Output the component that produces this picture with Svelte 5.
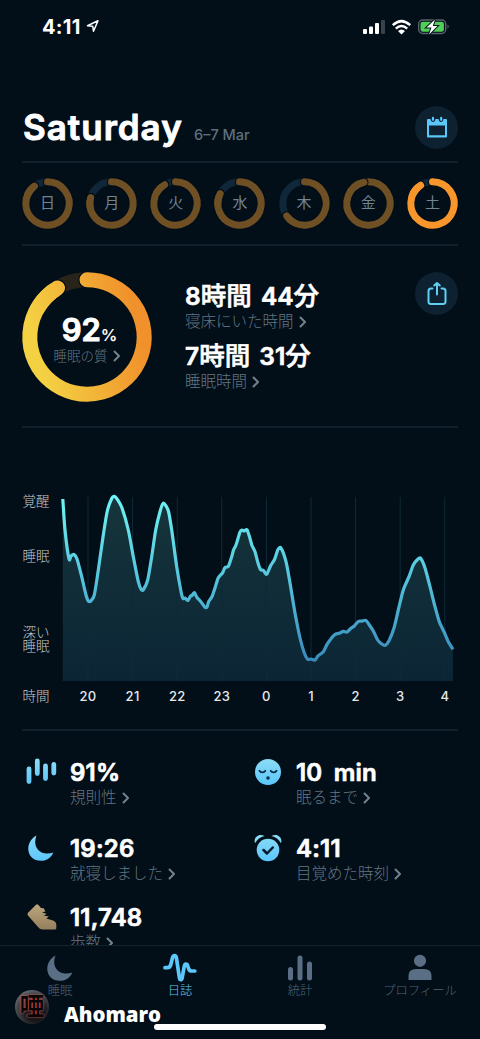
<script>
    const week = [
        { day: '日', end: 323 },
        { day: '月', end: 286 },
        { day: '火', end: 330 },
        { day: '水', end: 297 },
        { day: '木', end: 235 },
        { day: '金', end: 348 },
        { day: '土', end: 327, active: true }
    ];

    const stats = [
        { icon: 'bars', value: '91%', label: '規則性' },
        { icon: 'face', value: '10 min', label: '眠るまで' },
        { icon: 'moon', value: '19:26', label: '就寝しました' },
        { icon: 'alarm', value: '4:11', label: '目覚めた時刻' },
        { icon: 'shoe', value: '11,748', label: '歩数' }
    ];

    const tabs = [
        { icon: 'moon', label: '睡眠' },
        { icon: 'pulse', label: '日誌', active: true },
        { icon: 'stats', label: '統計' },
        { icon: 'user', label: 'プロフィール' }
    ];

    const hours = ['20', '21', '22', '23', '0', '1', '2', '3', '4'];
    const hourX = (i) => 88 + i * 44.6;

    const points = [
        [62.8, 499], [65, 530], [69, 559], [71, 556], [74, 554.5], [77, 559], [81.7, 576.7], [86, 595],
        [88.3, 601], [90.7, 601], [94.3, 595], [98.3, 570], [103.3, 535], [107.3, 511], [111.7, 498.5],
        [114.3, 496.3], [117.3, 499.3], [122, 508], [128.3, 530], [133.3, 556.7], [138.3, 581.7],
        [141.3, 589.7], [143.5, 589.5], [147.7, 580], [151.7, 556.7], [155.7, 530], [160, 511.7],
        [163.3, 503], [168.3, 510.7], [171.7, 530], [176.7, 566.7], [181.3, 593], [183, 598.5],
        [185, 598], [188, 600.5], [190.5, 596], [192, 595.5], [194.3, 592.5], [197, 597.5], [200.7, 601.5],
        [205, 607.3], [207, 607], [208.5, 602], [212, 596.5], [215, 588], [218.3, 577.7], [222.5, 573],
        [225, 567.5], [228.3, 566.5], [231.7, 556.7], [233.5, 550], [236, 545], [240, 532],
        [242, 530], [244, 531], [247, 529.8], [250, 538.5], [252, 545.5], [255, 551.7], [258, 563], [260.5, 569.5],
        [263.5, 570.5], [266.7, 574.3], [270.7, 565.5], [274.5, 559.5], [278, 549.5], [281, 548.2], [286, 561.7],
        [290, 583], [295, 613], [300, 638], [304.3, 653], [307.7, 659.3], [311, 659], [315, 660],
        [318.3, 655.7], [323.3, 651.7], [327.3, 644], [334.3, 635], [340, 633], [343.3, 631.3], [347, 632],
        [350.7, 628.5], [354.3, 626], [358.3, 621.5], [362, 621.2], [366, 620.5], [370, 626], [373.3, 631], [377.7, 640],
        [381.7, 644], [385.3, 645.3], [389, 640.7], [394, 628], [398.3, 610], [403.3, 590], [409, 576.7],
        [413.3, 565], [418, 559], [420.7, 558.3], [425, 568], [430, 586.7], [435, 606.7], [439.3, 621.7],
        [444, 631.7], [448.3, 641.7], [453, 649.3]
    ];

    // Catmull-Rom through the samples
    const curve = points.slice(0, -1).reduce((d, p1, i) => {
        const p0 = points[i - 1] || p1;
        const p2 = points[i + 1];
        const p3 = points[i + 2] || p2;
        const c1 = [p1[0] + (p2[0] - p0[0]) / 8, p1[1] + (p2[1] - p0[1]) / 8];
        const c2 = [p2[0] - (p3[0] - p1[0]) / 8, p2[1] - (p3[1] - p1[1]) / 8];
        return d + `C${c1} ${c2} ${p2}`;
    }, `M${points[0]}`);

    const at = (c, r, deg) => {
        const a = (deg * Math.PI) / 180;
        return [c + r * Math.sin(a), c - r * Math.cos(a)];
    };
    const arc = (c, r, from, to) =>
        `M${at(c, r, from)}A${r} ${r} 0 ${to - from > 180 ? 1 : 0} 1 ${at(c, r, to)}`;
</script>

{#snippet ring(c, r, width, end, color, track)}
    <g fill="none" stroke-width={width} stroke-linecap="round">
        <circle cx={c} cy={c} {r} stroke={track} />
        <path d={arc(c, r, 0, end)} stroke="#020e18" stroke-width={width + 2.5} />
        <path d={arc(c, r, 0, end)} stroke={color} />
        <circle cx={at(c, r, end)[0]} cy={at(c, r, end)[1]} r={width / 2 + 1} fill="#020e18" stroke="none" />
        <path d={arc(c, r, end - 30, end)} stroke={color} />
    </g>
{/snippet}

{#snippet chevron()}
    <svg class="chevron" width="8" height="12" viewBox="0 0 8 12"><path d="M1.5 1.5 6 6 1.5 10.5" /></svg>
{/snippet}

{#snippet icon(name)}
    <svg width="32" height="32" viewBox="0 0 32 32">
        {#if name === 'bars'}
            <path d="M4 13v12.500M12.300 5v12.500M20.500 10v12.500M28.800 8.500v8.500" stroke="url(#blue)" stroke-width="4.800" stroke-linecap="round" fill="none" />
        {:else if name === 'moon'}
            <path class="moon" d="M11.500 3.500C-1 10 1 29 16 28.800c6 0 10.500-3.500 12.300-8.300-10 4-22-3-16.800-17Z" />
        {:else if name === 'face'}
            <circle cx="17" cy="16" r="13" fill="url(#blue)" />
            <path d="M8.500 14.800q2.800 3.200 5.800 0M19.700 14.800q3 3.200 5.800 0" stroke="#07304a" stroke-width="1.800" stroke-linecap="round" fill="none" />
            <circle cx="17" cy="22" r="1.800" fill="#07304a" />
        {:else if name === 'alarm'}
            <g transform="translate(1 0)">
                <circle cx="16" cy="18" r="11.300" fill="url(#blue)" />
                <path d="M3 11.300C1 5.500 7 1 12.500 4 8.500 5 5 7.500 3 11.300ZM29 11.300C31 5.500 25 1 19.500 4c4 1 7.500 3.500 9.500 7.300Z" fill="url(#blue)" />
                <path d="m11.500 18 3.500 3.500 5.800-6" stroke="#061a28" stroke-width="2.500" stroke-linecap="round" stroke-linejoin="round" fill="none" />
            </g>
        {:else if name === 'shoe'}
            <path d="M2.800 12 11 3.800q1.300-1 2.400.3l2.600 3 2.700.2 1.800 3.200-3.500.8 4.800 1.600-3.200 1.500 5.200 1.200-2.500 1.800 6.700 2.200q3.300 1.300 3.300 4.200v3.500q0 1.200-1.500 1.200H17.500Q15 28.500 13 26L3 14.500q-1-1.200-.2-2.500Z" fill="url(#tan)" />
        {:else if name === 'pulse'}
            <path d="M1 15.700h2.300c2.200 0 3-1 3.600-3.500l1.600-6.400c.7-2.800 3.300-2.800 3.900 0l3 20c.4 2.600 2.200 2.600 2.800 0l2-11.300c.6-3 2.800-3 3.600-.4l.8 2.400c.5 1.900 1.200 2.500 2.900 2.500h3.300" stroke="#5ac8fa" stroke-width="3.700" stroke-linecap="round" stroke-linejoin="round" fill="none" />
        {:else if name === 'stats'}
            <path d="M6.500 17.500v8.500M16 6v20M25.500 12v14" stroke="#5a6f86" stroke-width="5" stroke-linecap="round" fill="none" />
        {:else}
            <circle cx="16" cy="8.800" r="6.100" fill="#5a6f86" />
            <path d="M4.500 28v-4q0-7 7.500-7h8q7.500 0 7.500 7v4Z" fill="#5a6f86" />
        {/if}
    </svg>
{/snippet}

<div class="screen">
    <svg class="defs" width="0" height="0">
        <defs>
            <linearGradient id="blue" gradientUnits="userSpaceOnUse" x1="0" y1="2" x2="0" y2="30">
                <stop offset="0" stop-color="#8eddf5" />
                <stop offset="1" stop-color="#59c5fc" />
            </linearGradient>
            <linearGradient id="tan" x1="0" y1="0" x2="0" y2="1">
                <stop offset="0" stop-color="#bca67d" />
                <stop offset="1" stop-color="#94805c" />
            </linearGradient>
        </defs>
    </svg>

    <div class="status">
        <div class="clock">
            4:11
            <svg width="14" height="14" viewBox="0 0 14 14"><path d="M1.500 6.800 12 1.800 7.500 12.300 6.700 7.200Z" fill="none" stroke="#fff" stroke-width="1.500" stroke-linejoin="round" /></svg>
        </div>
        <svg width="88" height="18" viewBox="0 0 88 18">
            <g fill="#fff">
                <rect x="1" y="10" width="4" height="5" rx="1" />
                <rect x="7" y="7.500" width="4" height="7.500" rx="1" />
                <rect x="13" y="4" width="4" height="11" rx="1" />
                <rect x="19" y="1" width="4" height="14" rx="1" fill="#39424b" />
            </g>
            <g fill="none" stroke="#fff" stroke-width="2.500">
                <path d="M30.800 6.200Q39.500-2 48.200 6.200" />
                <path d="M33.800 9.700Q39.500 4.300 45.200 9.700" />
            </g>
            <path d="m36 12 3.500 3.500L43 12q-3.500-3-7 0Z" fill="#fff" />
            <rect x="56.700" y="1" width="27" height="13.500" rx="4" fill="none" stroke="#59636b" stroke-width="1.400" />
            <rect x="58.500" y="2.800" width="23.400" height="10" rx="2.300" fill="#4fce58" />
            <path d="M85.500 5.500q2.500 2 0 4.500Z" fill="#59636b" />
            <path d="m73 .5-8.500 8h5l-2.500 7 8.500-8.500h-4.700Z" fill="#fff" stroke="#06151b" stroke-width="2" paint-order="stroke" />
        </svg>
    </div>

    <header>
        <h1>Saturday</h1>
        <span class="date">6–7 Mar</span>
        <button aria-label="calendar">
            <svg width="24" height="24" viewBox="0 0 24 24">
                <path d="M3 4h2.500q.5 3 2.500 3t2.500-3h3q.500 3 2.500 3t2.500-3H21q1 0 1 1v16.500q0 1-1 1H3q-1 0-1-1V5q0-1 1-1ZM4 10.500v9.800h16v-9.800Z" fill="#5ac8fa" fill-rule="evenodd" />
                <path d="M8 2.800v2M16.200 2.800v2" stroke="#5ac8fa" stroke-width="2.200" stroke-linecap="round" />
            </svg>
        </button>
    </header>

    <div class="week">
        {#each week as d}
            <div class="day">
                <svg width="51" height="51" viewBox="0 0 51 51">
                    {@render ring(25.5, 21.7, 7, d.end, d.active ? '#f8962c' : '#6f4f24', '#10273a')}
                </svg>
                <span>{d.day}</span>
            </div>
        {/each}
    </div>

    <section class="summary">
        <div class="quality">
            <svg width="130" height="130" viewBox="0 0 130 130">
                <defs>
                    <linearGradient id="sun" gradientUnits="userSpaceOnUse" x1="112" y1="35" x2="10" y2="62">
                        <stop offset="0" stop-color="#f0912b" />
                        <stop offset=".5" stop-color="#f2b036" />
                        <stop offset="1" stop-color="#f4d143" />
                    </linearGradient>
                </defs>
                {@render ring(65, 57.2, 15, 329, 'url(#sun)', '#28241a')}
            </svg>
            <div class="score">
                <div class="percent">92<small>%</small></div>
                <div class="label">睡眠の質{@render chevron()}</div>
            </div>
        </div>
        <div class="times">
            <div class="time">8<b>時間</b> 44<b>分</b></div>
            <div class="label">寝床にいた時間{@render chevron()}</div>
            <div class="time">7<b>時間</b> 31<b>分</b></div>
            <div class="label">睡眠時間{@render chevron()}</div>
        </div>
        <button aria-label="share">
            <svg width="24" height="24" viewBox="0 0 24 24" fill="none" stroke="#5fd0f4" stroke-width="2" stroke-linecap="round" stroke-linejoin="round">
                <path d="M7.500 6.500H6Q3.500 6.500 3.500 9v10.500Q3.500 22 6 22h12q2.500 0 2.500-2.500V9q0-2.500-2.500-2.500h-1.500M12 12.500V1M9.200 3.500 12 1l2.800 2.500" />
            </svg>
        </button>
    </section>

    <svg class="chart" width="480" height="301" viewBox="0 428 480 301">
        <defs>
            <linearGradient id="line" gradientUnits="userSpaceOnUse" x1="0" y1="496" x2="0" y2="661">
                <stop offset="0" stop-color="#6ff3f5" />
                <stop offset=".5" stop-color="#55c4dc" />
                <stop offset="1" stop-color="#398abb" />
            </linearGradient>
            <linearGradient id="area" gradientUnits="userSpaceOnUse" x1="0" y1="496" x2="0" y2="681">
                <stop offset="0" stop-color="#17353b" />
                <stop offset=".5" stop-color="#102d38" />
                <stop offset="1" stop-color="#0c2535" />
            </linearGradient>
        </defs>
        <path d="{curve}V681H62.800Z" fill="url(#area)" />
        {#each hours as hour, i}
            <path class="grid" d="M{hourX(i)} 497V681" />
            <text class="hour" x={hourX(i)} y="701">{hour}</text>
        {/each}
        <path d={curve} fill="none" stroke="url(#line)" stroke-width="3.200" stroke-linejoin="round" />
        <g class="axis">
            <text x="22.500" y="505.500">覚醒</text>
            <text x="22.500" y="560.500">睡眠</text>
            <text x="22.500" y="637">深い</text>
            <text x="22.500" y="651">睡眠</text>
            <text x="22.500" y="701">時間</text>
        </g>
    </svg>

    <section class="stats">
        {#each stats as s}
            <div class="stat">
                {@render icon(s.icon)}
                <div>
                    <div class="value">{s.value}</div>
                    <div class="label">{s.label}{@render chevron()}</div>
                </div>
            </div>
        {/each}
    </section>

    <nav>
        {#each tabs as t}
            <div class="tab" class:active={t.active}>
                {@render icon(t.icon)}
                <span>{t.label}</span>
            </div>
        {/each}
    </nav>

    <div class="home"></div>
    <div class="mark">
        <span class="avatar">唖</span>
        <span class="name">Ahomaro</span>
    </div>
</div>

<style>
:global(body) {
    background: #020e18;
}
.screen {
    position: relative;
    display: flex;
    flex-direction: column;
    box-sizing: border-box;
    width: 480px;
    height: 1039px;
    overflow: hidden;
    background: #020e18;
    color: #fff;
    font-family: Inter, "Noto Sans CJK JP", sans-serif;
}
.defs {
    position: absolute;
}
svg {
    display: block;
    flex: none;
    overflow: visible;
}
.status {
    display: flex;
    justify-content: space-between;
    align-items: flex-start;
    height: 94px;
    box-sizing: border-box;
    padding: 19px 30px 0 42px;
}
.clock {
    display: flex;
    gap: 5px;
    font-size: 20px;
    line-height: 17px;
    font-weight: 700;
    letter-spacing: 0.3px;
}
header {
    display: flex;
    align-items: baseline;
    height: 67px;
    margin: 0 22px;
    border-bottom: 2px solid #10202d;
}
h1 {
    margin: 0 12px 0 1px;
    width: 159px;
    font-size: 35px;
    line-height: 66px;
    font-weight: 600;
    letter-spacing: 1px;
    -webkit-text-stroke: 0.9px #fff;
}
.date {
    flex: 1;
    color: #5d6f7d;
    font-size: 14.5px;
    font-weight: 500;
    padding-bottom: 1px;
}
button {
    display: grid;
    place-items: center;
    align-self: flex-start;
    width: 43px;
    height: 43px;
    margin-top: 12px;
    padding: 0;
    border: 0;
    border-radius: 50%;
    background: #0d2130;
}
.week {
    display: flex;
    justify-content: space-between;
    height: 84px;
    box-sizing: border-box;
    padding-top: 15px;
    margin: 0 22px;
    border-bottom: 2px solid #10202d;
}
.day {
    display: grid;
    width: 51px;
    height: 51px;
    place-items: center;
    color: #718492;
    font-size: 15px;
    line-height: 20px;
}
.day svg, .day span {
    grid-area: 1 / 1;
}
.summary {
    display: flex;
    height: 182px;
    box-sizing: border-box;
    margin: 0 22px;
    border-bottom: 2px solid #10202d;
}
.quality {
    display: grid;
    width: 130px;
    height: 130px;
    margin-top: 26px;
    place-items: center;
}
.quality > * {
    grid-area: 1 / 1;
}
.score {
    padding-top: 5px;
    text-align: center;
}
.percent {
    font-size: 31px;
    line-height: 28px;
    font-weight: 600;
    padding-left: 4px;
    -webkit-text-stroke: 1px #fff;
}
.percent small {
    font-size: 16.5px;
    letter-spacing: -1px;
    -webkit-text-stroke: 0;
}
.label {
    display: flex;
    align-items: center;
    color: #627682;
    font-weight: 300;
    font-size: 15.5px;
    line-height: 20px;
}
.score .label {
    font-size: 13.5px;
    line-height: 14px;
}
.chevron {
    margin-left: 5px;
}
.chevron path {
    fill: none;
    stroke: #71838f;
    stroke-width: 2;
    stroke-linecap: round;
    stroke-linejoin: round;
}
.times {
    flex: 1;
    margin: 35px 0 0 33px;
}
.time {
    height: 31px;
    font-size: 24.5px;
    line-height: 30px;
    font-weight: 600;
    word-spacing: 3px;
    -webkit-text-stroke: 0.6px #fff;
}
.time b {
    font-size: 25.5px;
    font-weight: 500;
}
.times .label {
    height: 20px;
    margin-bottom: 9px;
}
.summary button {
    margin-top: 26px;
}
.grid {
    stroke: #0f2a38;
    stroke-width: 1;
}
.hour {
    fill: #e4e8ea;
    font-size: 13px;
    font-weight: 500;
    text-anchor: middle;
    letter-spacing: 0.3px;
}
.axis {
    fill: #c5cacd;
    font-size: 13.5px;
    font-weight: 300;
}
.stats {
    flex: none;
    display: grid;
    grid-template-columns: 226px 1fr;
    grid-template-rows: 76px 69px 60px;
    height: 216px;
    box-sizing: border-box;
    overflow: hidden;
    margin: 0 22px;
    padding: 25px 0 0 3px;
    border-top: 2px solid #10202d;
}
.stat {
    display: flex;
    gap: 13px;
}
.value {
    font-size: 24px;
    line-height: 34px;
    font-weight: 600;
    letter-spacing: 0.2px;
    word-spacing: 5px;
    -webkit-text-stroke: 0.7px #fff;
}
.stat .label {
    margin-top: -2px;
}
.moon {
    fill: url(#blue);
}
.tab .moon {
    fill: #5a6f86;
}
nav {
    flex: none;
    display: grid;
    grid-template-columns: repeat(4, 1fr);
    height: 94px;
    box-sizing: border-box;
    border-top: 1px solid #12222e;
    background: #020e18;
}
.tab {
    display: flex;
    flex-direction: column;
    align-items: center;
    padding-top: 6px;
    color: #506477;
    font-size: 12.3px;
    line-height: 14px;
    font-weight: 300;
}
.active {
    color: #5ac8fa;
}
.home {
    position: absolute;
    left: 154px;
    top: 1024px;
    width: 172px;
    height: 6px;
    border-radius: 3px;
    background: #fff;
}
.mark {
    position: absolute;
    left: 15px;
    top: 989px;
    display: flex;
    align-items: center;
    gap: 15px;
}
.avatar {
    width: 34px;
    height: 34px;
    border-radius: 50%;
    background: radial-gradient(circle at 60% 65%, #161518 30%, #4b4e52 65%, #a0a4a7 100%);
    color: #080507;
    font-size: 25px;
    line-height: 32px;
    font-weight: 700;
    text-align: center;
    text-shadow: 0 0 2px #e0484e, 0 0 1px #d8b0b0;
}
.name {
    padding-top: 15px;
    font-family: "Open Sans", sans-serif;
    font-size: 20.4px;
    line-height: 20px;
    font-weight: 800;
}
</style>
